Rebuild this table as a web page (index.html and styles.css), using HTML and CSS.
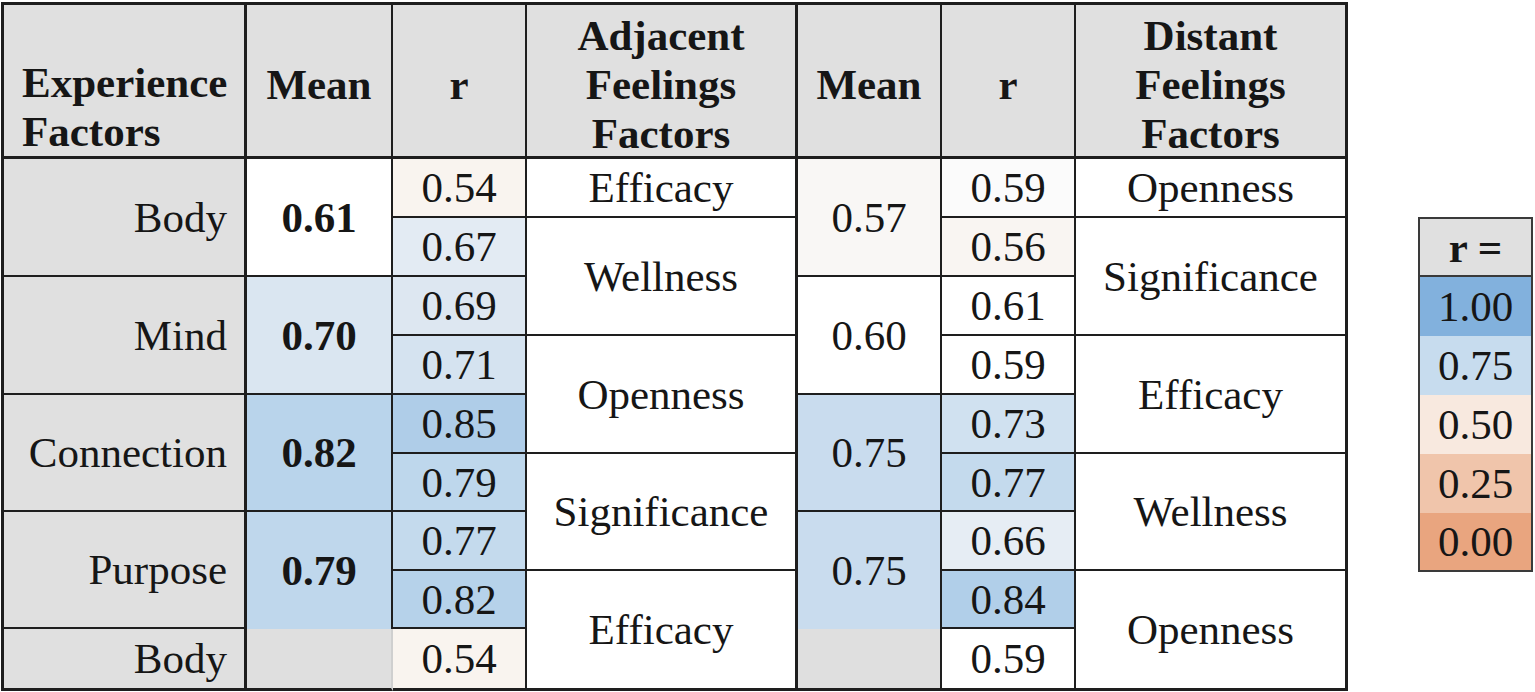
FILE: index.html
```html
<!DOCTYPE html>
<html lang="en">
<head>
<meta charset="utf-8">
<title>Experience and feelings factors correlation table</title>
<link rel="stylesheet" href="styles.css">
</head>
<body class="doc">
<main class="layout">
  <section class="corr-table">
    <div class="tc hd col1 hd-left"><span>Experience<br>Factors</span></div>
    <div class="tc hd col2"><span>Mean</span></div>
    <div class="tc hd col3"><span>r</span></div>
    <div class="tc hd col4"><span>Adjacent<br>Feelings<br>Factors</span></div>
    <div class="tc hd col5"><span>Mean</span></div>
    <div class="tc hd col6"><span>r</span></div>
    <div class="tc hd col7"><span>Distant<br>Feelings<br>Factors</span></div>

    <div class="tc col1 factor rs2"><span>Body</span></div>
    <div class="tc col2 strong rs2 bg-w"><span>0.61</span></div>
    <div class="tc col3 bg-54"><span>0.54</span></div>
    <div class="tc col4"><span>Efficacy</span></div>
    <div class="tc col5 rs2 bg-57"><span>0.57</span></div>
    <div class="tc col6 bg-59"><span>0.59</span></div>
    <div class="tc col7"><span>Openness</span></div>

    <div class="tc col3 bg-67"><span>0.67</span></div>
    <div class="tc col4 rs2"><span>Wellness</span></div>
    <div class="tc col6 bg-56"><span>0.56</span></div>
    <div class="tc col7 rs2"><span>Significance</span></div>

    <div class="tc col1 factor rs2"><span>Mind</span></div>
    <div class="tc col2 strong rs2 bg-70"><span>0.70</span></div>
    <div class="tc col3 bg-69"><span>0.69</span></div>
    <div class="tc col5 rs2 bg-w"><span>0.60</span></div>
    <div class="tc col6 bg-w"><span>0.61</span></div>

    <div class="tc col3 bg-71"><span>0.71</span></div>
    <div class="tc col4 rs2"><span>Openness</span></div>
    <div class="tc col6 bg-w"><span>0.59</span></div>
    <div class="tc col7 rs2"><span>Efficacy</span></div>

    <div class="tc col1 factor rs2"><span>Connection</span></div>
    <div class="tc col2 strong rs2 bg-82m"><span>0.82</span></div>
    <div class="tc col3 bg-85"><span>0.85</span></div>
    <div class="tc col5 rs2 bg-75m"><span>0.75</span></div>
    <div class="tc col6 bg-73"><span>0.73</span></div>

    <div class="tc col3 bg-79"><span>0.79</span></div>
    <div class="tc col4 rs2"><span>Significance</span></div>
    <div class="tc col6 bg-77"><span>0.77</span></div>
    <div class="tc col7 rs2"><span>Wellness</span></div>

    <div class="tc col1 factor rs2"><span>Purpose</span></div>
    <div class="tc col2 strong rs2 bg-79m open-bottom"><span>0.79</span></div>
    <div class="tc col3 bg-77"><span>0.77</span></div>
    <div class="tc col5 rs2 bg-75m open-bottom"><span>0.75</span></div>
    <div class="tc col6 bg-66"><span>0.66</span></div>

    <div class="tc col3 bg-82"><span>0.82</span></div>
    <div class="tc col4 rs2 end"><span>Efficacy</span></div>
    <div class="tc col6 bg-84"><span>0.84</span></div>
    <div class="tc col7 rs2 end"><span>Openness</span></div>

    <div class="tc col1 factor end"><span>Body</span></div>
    <div class="tc col2 blank soft-right end"></div>
    <div class="tc col3 bg-54 end"><span>0.54</span></div>
    <div class="tc col5 blank end"></div>
    <div class="tc col6 bg-w end"><span>0.59</span></div>
  </section>

  <aside class="scale">
    <div class="scale-head"><span>r =</span></div>
    <div class="scale-step s100"><span>1.00</span></div>
    <div class="scale-step s75"><span>0.75</span></div>
    <div class="scale-step s50"><span>0.50</span></div>
    <div class="scale-step s25"><span>0.25</span></div>
    <div class="scale-step s00"><span>0.00</span></div>
  </aside>
</main>
</body>
</html>
```

FILE: styles.css
```css
.doc {
  margin: 0;
  background: #ffffff;
}

.layout {
  display: flex;
  align-items: flex-start;
  padding: 2px 0 0 1px;
  color: #161616;
  font-family: "Liberation Serif", "Tinos", "Times New Roman", serif !important;
  font-size: 43px;
}

.corr-table {
  display: grid;
  grid-template-columns: 243px 146px 134px 271px 144px 134px 272px;
  grid-template-rows: 154px 59px 59px 59px 59px 59px 58px 59px 58px 62px;
  border-left: 3px solid #1e1e1e;
  border-top: 3px solid #1e1e1e;
  box-sizing: border-box;
}

.tc {
  box-sizing: border-box;
  display: flex;
  align-items: center;
  justify-content: center;
  border-bottom: 2px solid #1e1e1e;
  border-right: 2px solid #1e1e1e;
  line-height: 1;
  white-space: nowrap;
  background: #ffffff;
  font-family: "Liberation Serif", "Tinos", "Times New Roman", serif !important;
}

.layout span {
  font-family: "Liberation Serif", "Tinos", "Times New Roman", serif !important;
}

.col1 { grid-column: 1; border-right-width: 3px; }
.col2 { grid-column: 2; }
.col3 { grid-column: 3; }
.col4 { grid-column: 4; border-right-width: 3px; }
.col5 { grid-column: 5; }
.col6 { grid-column: 6; }
.col7 { grid-column: 7; border-right-width: 3px; }

.rs2 { grid-row: span 2; }

.hd {
  background: #e0e0e0;
  font-weight: bold;
  border-bottom-width: 3px;
  line-height: 49px;
  text-align: center;
  padding-top: 7px;
}

.hd-left {
  justify-content: flex-start;
  align-items: flex-end;
  text-align: left;
  padding: 0 0 0 18px;
}

.factor {
  background: #e0e0e0;
  justify-content: flex-end;
  padding-right: 17px;
}

.strong { font-weight: bold; }

.end { border-bottom-width: 3px; }
.open-bottom { border-bottom: none; }

.blank { background: #dfdfdf; }
.soft-right { border-right-color: #cfcfcf; }

/* heat-scale fills for each r value */
.bg-w { background: #ffffff; }
.bg-54 { background: #f9f4ef; }
.bg-67 { background: #e3ebf3; }
.bg-70 { background: #dae6f1; }
.bg-69 { background: #dde7f1; }
.bg-71 { background: #d5e3f0; }
.bg-82m { background: #b9d4eb; }
.bg-85 { background: #afcde8; }
.bg-79 { background: #bed7ec; }
.bg-79m { background: #bfd7ec; }
.bg-77 { background: #c4daed; }
.bg-82 { background: #b6d2ea; }
.bg-57 { background: #f9f7f5; }
.bg-59 { background: #fbfbfb; }
.bg-56 { background: #f9f5f2; }
.bg-75m { background: #c9dcee; }
.bg-73 { background: #d0e1f0; }
.bg-66 { background: #e6edf4; }
.bg-84 { background: #b1cfe9; }

/* legend */
.scale {
  margin-left: 70px;
  margin-top: 215px;
  width: 115px;
  box-sizing: border-box;
  border: 2px solid #3a3a3a;
  display: flex;
  flex-direction: column;
  font-family: "Liberation Serif", "Tinos", "Times New Roman", serif !important;
}

.scale-head {
  height: 56px;
  background: #e0e0e0;
  border-bottom: 2px solid #3a3a3a;
  font-weight: bold;
  display: flex;
  align-items: center;
  justify-content: center;
  line-height: 1;
}

.scale-step {
  height: 59px;
  display: flex;
  align-items: center;
  justify-content: center;
  line-height: 1;
}

.s100 { background: #82b1dd; }
.s75 { background: #c7dcee; }
.s50 { background: #f8e9df; }
.s25 { background: #f0c5ab; }
.s00 { background: #e9a57f; height: 57px; }
```
